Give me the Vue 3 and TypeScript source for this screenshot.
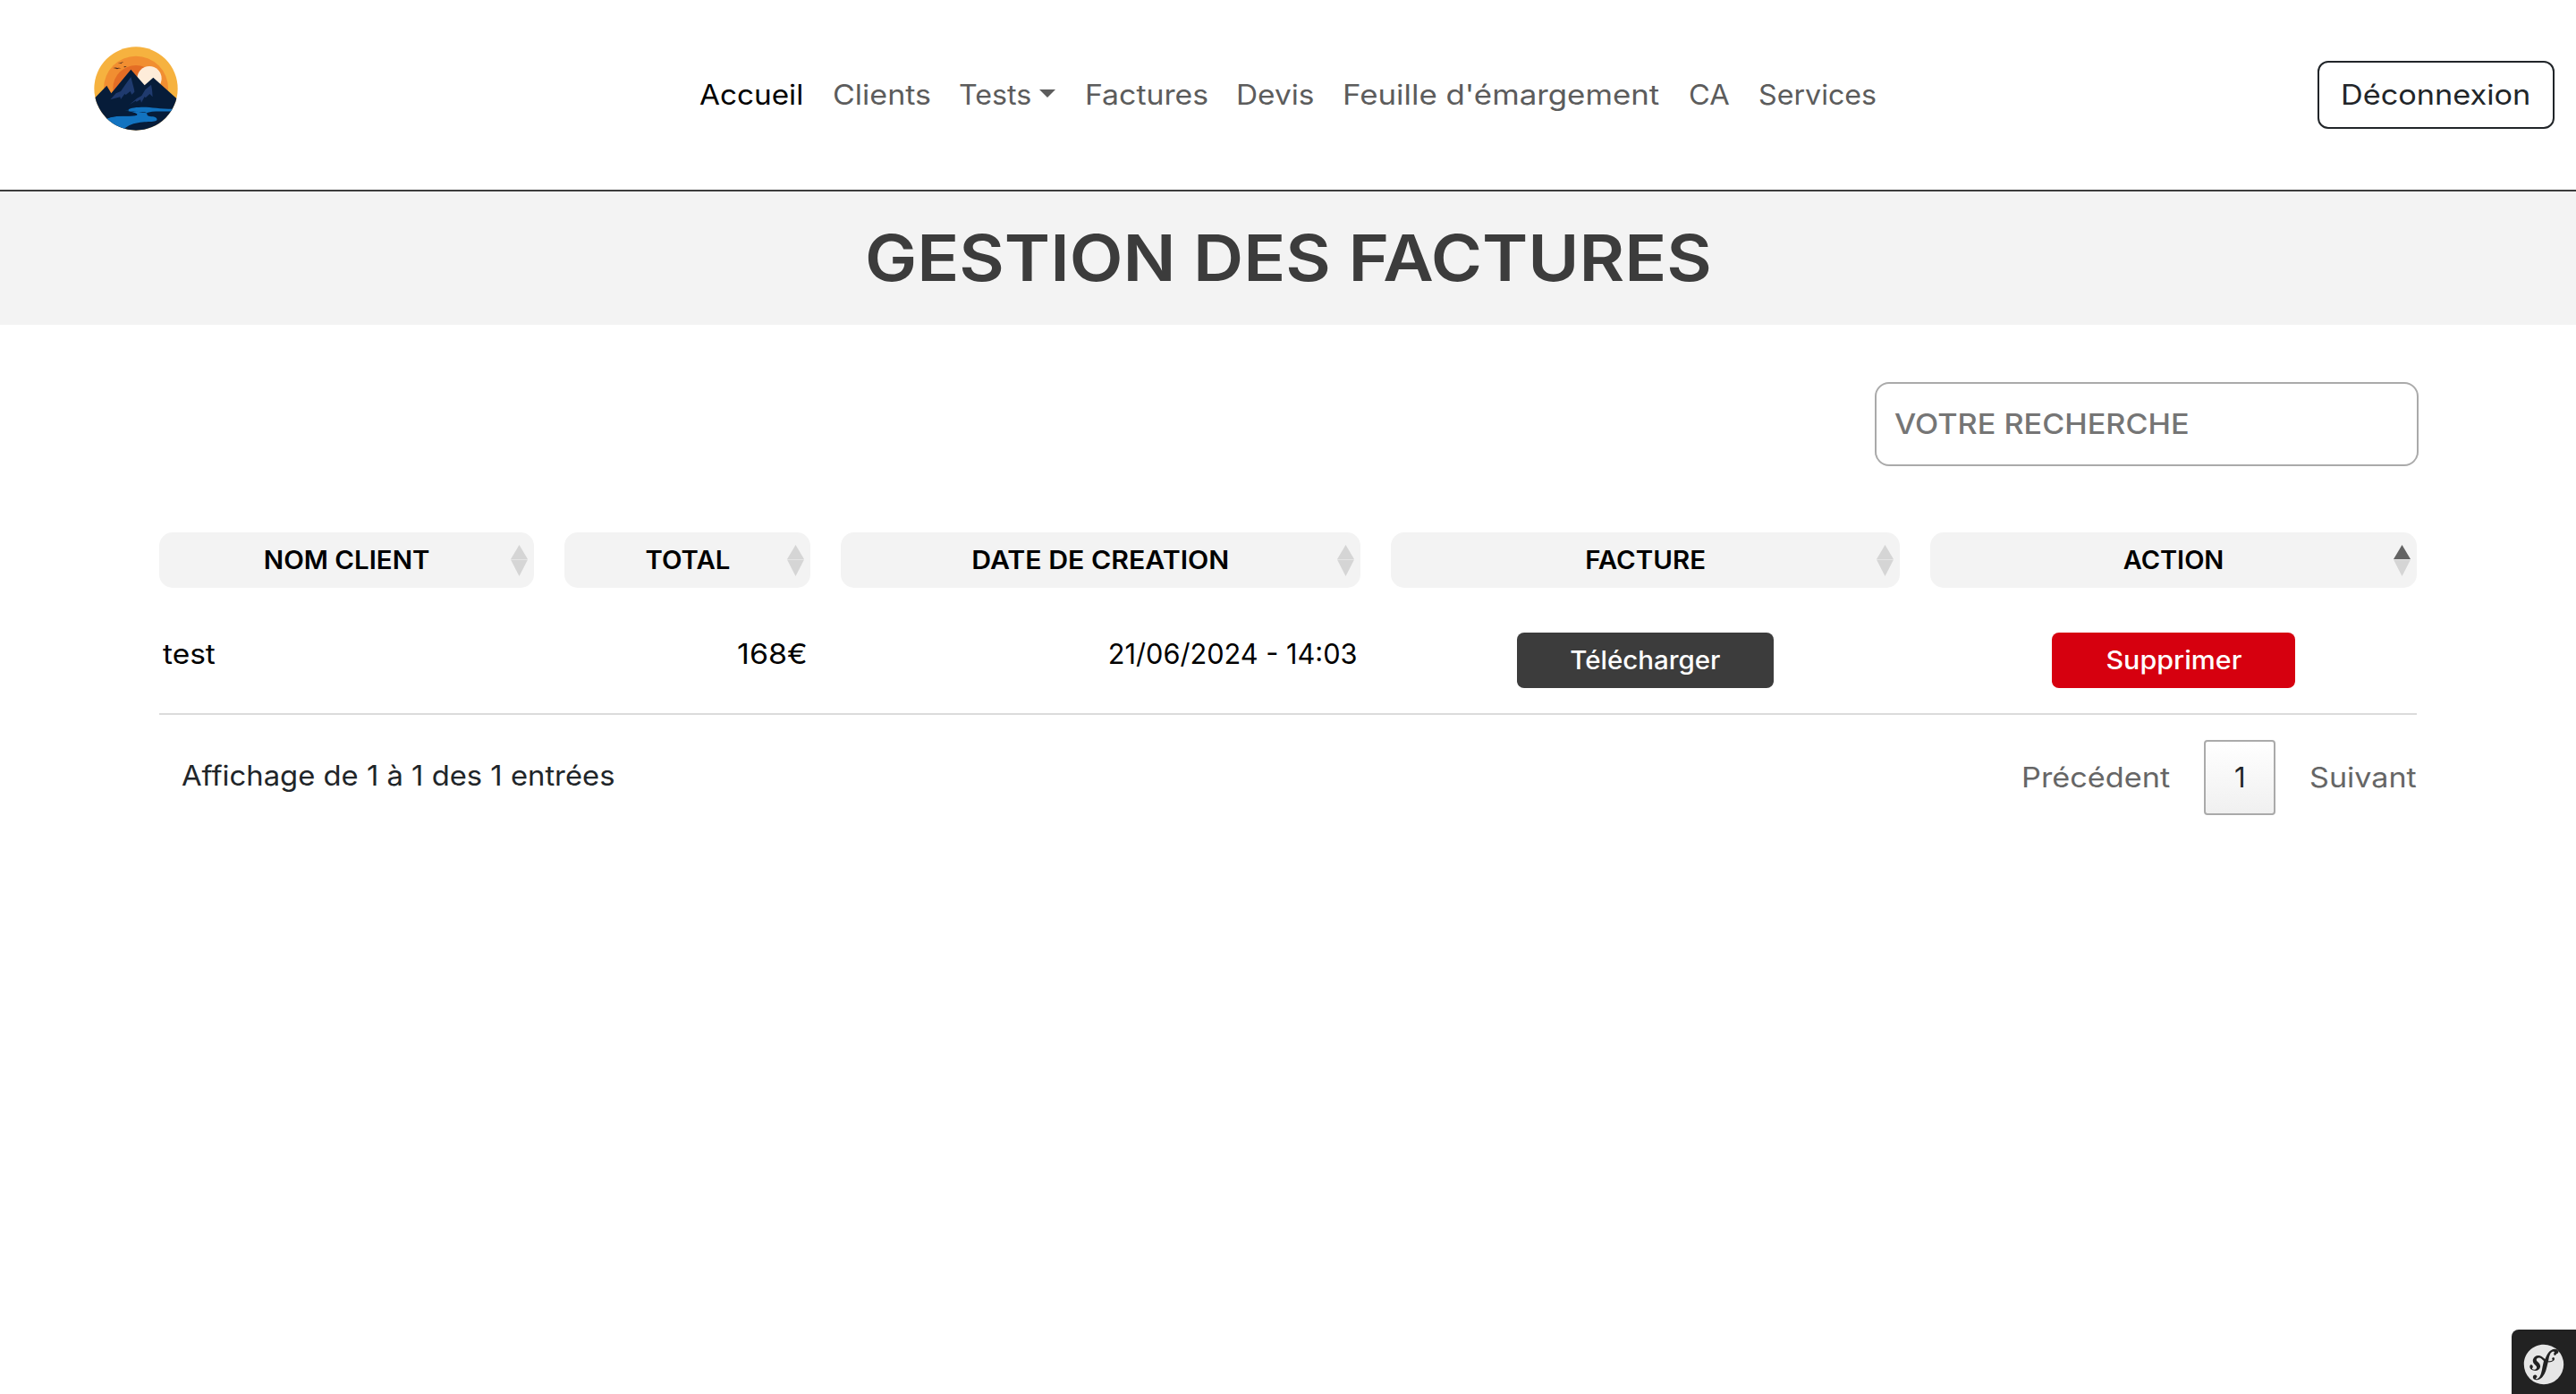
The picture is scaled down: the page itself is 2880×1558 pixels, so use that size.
<script setup lang="ts">
interface NavItem { label: string; width: number; stretch: number; active?: boolean; dropdown?: boolean }
interface Column { label: string; stretch: number; sorted?: boolean }

const navItems: NavItem[] = [
  { label: 'Accueil', width: 117, stretch: 1.074, active: true },
  { label: 'Clients', width: 108.6, stretch: 1.098 },
  { label: 'Tests', width: 108.6, stretch: 1.04, dropdown: true },
  { label: 'Factures', width: 137.6, stretch: 1.09 },
  { label: 'Devis', width: 87.2, stretch: 1.077 },
  { label: "Feuille d'émargement", width: 354.8, stretch: 1.124 },
  { label: 'CA', width: 45.4, stretch: 1.054 },
  { label: 'Services', width: 132, stretch: 1.0385 },
]

const columns: Column[] = [
  { label: 'NOM CLIENT', stretch: 1.059 },
  { label: 'TOTAL', stretch: 1.054 },
  { label: 'DATE DE CREATION', stretch: 1.088 },
  { label: 'FACTURE', stretch: 1.06 },
  { label: 'ACTION', stretch: 1.041, sorted: true },
]

const widen = (n: number) => ({ transform: `scaleX(${n})` })
</script>

<template>
  <div class="page">
    <header class="navbar">
      <svg class="logo" viewBox="46 34 282 282">
        <defs>
          <clipPath id="disc"><circle cx="187" cy="175" r="140" /></clipPath>
        </defs>
        <g clip-path="url(#disc)">
          <rect x="46" y="34" width="282" height="282" fill="#f6b23f" />
          <circle cx="187" cy="174" r="108" fill="#f18e31" />
          <circle cx="187" cy="174" r="77" fill="#e46d25" />
          <circle cx="232" cy="141" r="41" fill="#feecd9" />
          <path d="M40 216 L89 165 L104 191 L170 111 L216 164 L245 138 L330 214 V320 H40Z" fill="#061c39" />
          <path d="M170 136 L181 178 L182 186 L173 195 L168 184 L153 196 L149 193 L136 211 L134 203 L101 212 L120 191 L136 184 L151 162 Z" fill="#1f3a6e" />
          <path d="M238 162 L241 178 L243 203 L233 193 L219 206 L216 202 L205 222 L202 212 L189 219 L186 216 L166 228 L190 208 L206 199 L218 179 Z" fill="#1f3a6e" />
          <path d="M330 243 C270 245 240 236 205 237 C180 238 160 241 162 248 C168 256 222 250 224 258 C224 266 228 268 244 269 C258 272 262 280 252 284 C236 290 186 280 150 308 L140 325 H100 L86 276 C120 262 160 270 184 266 C196 263 190 257 166 254 C150 252 130 253 110 252 L162 249 C180 252 200 252 222 257 C240 248 280 253 330 251Z" fill="#1273c0" />
          <path d="M86 250 H160 C185 256 198 261 188 265 C160 269 125 262 88 276Z" fill="#061c39" />
          <path d="M110 106 Q120 103 125 106 Q130 104 138 107 Q128 107 124 110 Q119 107 110 106Z M126 88 Q133 87 136 89 Q141 84 146 86 Q140 88 137 92 Q132 89 126 88Z M145 103 L150 100 L156 101 L150 104Z" fill="#4a2b1e" />
        </g>
      </svg>
      <nav class="nav">
        <a v-for="item in navItems" :key="item.label" class="nav-link" :class="{ active: item.active }"
          :style="{ width: `${item.width}px` }">
          <span class="text start" :style="widen(item.stretch)">{{ item.label }}</span>
          <svg v-if="item.dropdown" class="caret" viewBox="0 0 18 9"><path d="M0 0H18L9 9Z" fill="currentColor" /></svg>
        </a>
      </nav>
      <button class="logout"><span class="text start">Déconnexion</span></button>
    </header>

    <div class="banner"><h1>GESTION DES FACTURES</h1></div>

    <main class="content">
      <div class="search"><span class="text start">VOTRE RECHERCHE</span></div>

      <div class="grid head">
        <div v-for="col in columns" :key="col.label" class="th">
          <span class="text" :style="widen(col.stretch)">{{ col.label }}</span>
          <svg class="sort" viewBox="0 0 19 35">
            <path d="M9.5 0L19 16H0Z" :fill="col.sorted ? '#636363' : '#d5d5d5'" />
            <path d="M0 16.6H19L9.5 35Z" fill="#d5d5d5" />
          </svg>
        </div>
      </div>

      <div class="grid row">
        <div class="cell name"><span class="text start">test</span></div>
        <div class="cell right total"><span class="text end">168€</span></div>
        <div class="cell right date"><span class="text end">21/06/2024 - 14:03</span></div>
        <div class="action"><button class="btn download"><span class="text">Télécharger</span></button></div>
        <div class="action"><button class="btn delete"><span class="text">Supprimer</span></button></div>
      </div>

      <footer class="footer">
        <div class="info"><span class="text start">Affichage de 1 à 1 des 1 entrées</span></div>
        <div class="pager">
          <span class="prev"><span class="text start">Précédent</span></span>
          <span class="current">1</span>
          <span class="next"><span class="text start">Suivant</span></span>
        </div>
      </footer>
    </main>

    <div class="toolbar">
      <svg viewBox="0 0 24 24">
        <path fill="#e6e6e6" d="M12 .9C5.8.9.9 5.8.9 12a11.1 11.1 0 1 0 22.2 0A11.1 11.1 0 0 0 12 .9zm6.5 6c-.6 0-.9-.3-.9-.8 0-.2 0-.4.2-.6l.2-.4c0-.3-.5-.4-.6-.4-1.8.1-2.3 2.5-2.7 4.4l-.2 1c1 .2 1.8 0 2.2-.3.6-.4-.2-.7-.1-1.2.1-.3.5-.5.7-.6.5 0 .7.5.7.9 0 .7-1 1.8-3 1.8l-.6-.1-.6 2.4c-.4 1.6-.8 3.8-2.4 5.7-1.4 1.7-2.9 1.9-3.5 1.9-1.2 0-1.9-.6-2-1.5 0-.8.7-1.3 1.2-1.3.6 0 1.1.5 1.1 1s-.2.6-.4.6c-.1.1-.3.2-.3.4 0 .1.1.3.4.3.5 0 .8-.3 1.1-.5 1.2-.9 1.6-2.7 2.2-5.7l.1-.7.7-3.2c-.8-.6-1.3-1.4-2.4-1.7-.6-.1-1.1.1-1.5.5-.4.5-.2 1.1.2 1.5l.7.6c.7.8 1.2 1.6 1 2.5-.3 1.5-2 2.6-4 1.9-1.8-.6-2-1.8-1.8-2.5.2-.6.6-.7 1.1-.6.5.2.6.7.6 1.2l-.1.3c-.2.1-.3.3-.3.4-.1.4.4.6.7.7.7.3 1.6-.2 1.8-.8.2-.6-.2-1.1-.4-1.2l-.8-.9c-.4-.4-1.2-1.5-.8-2.8.2-.5.5-1 .9-1.4 1-.7 2-.8 3-.6 1.3.4 1.9 1.2 2.8 1.9.5-1.3 1.1-2.6 2-3.8.9-1 2-1.7 3.3-1.8 1.2 0 2.2.5 2.2 1.4 0 .4-.2 1.2-1 1.2z" />
      </svg>
    </div>
  </div>
</template>

<style>
body { background: #fff; overflow: hidden; }
</style>

<style scoped>
* { box-sizing: border-box; }
.page {
  position: relative;
  height: 1558px;
  font-family: Inter, "Open Sans", sans-serif;
  font-size: 31px;
  line-height: 48px;
  color: #212529;
  white-space: nowrap;
}
button { font: inherit; color: inherit; margin: 0; padding: 0; cursor: pointer; }
.text { display: inline-block; }
.start { transform-origin: left; }
.end { transform-origin: right; }

.navbar {
  display: flex;
  align-items: center;
  height: 214px;
  padding: 0 24px 0 105.4px;
  border-bottom: 2px solid #3c3c3c;
}
.logo { width: 94px; height: 94px; margin-top: -15px; flex: none; }
.nav { display: flex; gap: 32px; margin-left: 583px; }
.nav-link { display: flex; align-items: center; flex: none; color: #5c5c5c; }
.nav-link.active { color: #000; }
.caret { width: 18px; height: 9px; flex: none; margin: -3px 0 0 11.4px; }
.logout {
  width: 265px;
  height: 76px;
  margin-left: auto;
  padding-left: 24.2px;
  border: 2px solid #212529;
  border-radius: 12px;
  background: #fff;
  text-align: left;
}
.logout .text { transform: scaleX(1.105); }

.banner {
  display: flex;
  align-items: center;
  justify-content: center;
  height: 149px;
  background: #f3f3f3;
}
h1 {
  margin: -1px 0 0;
  font-size: 72px;
  font-weight: 600;
  line-height: 88px;
  color: #3c3c3c;
  transform: scaleX(1.08);
}

.content { padding: 64px 178px 0; }
.search {
  display: flex;
  align-items: center;
  width: 608px;
  height: 94px;
  margin-left: auto;
  margin-right: -2px;
  padding-left: 19.5px;
  border: 2px solid #aaa;
  border-radius: 16px;
  color: #757575;
  font-weight: 500;
}
.search .text { transform: scaleX(1.103); }
.grid {
  display: grid;
  grid-template-columns: 419px 275px 581px 569px 544px;
  gap: 34px;
}
.head { margin-top: 74px; }
.th {
  position: relative;
  display: flex;
  align-items: center;
  justify-content: center;
  height: 62px;
  border-radius: 15px;
  background: #f3f3f3;
  color: #000;
  font-size: 27.8px;
  font-weight: 600;
}
.sort { position: absolute; right: 7.5px; top: 13.5px; width: 19px; height: 35px; }
.row { height: 142px; border-bottom: 2px solid #dbdbdb; color: #000; }
.cell { padding-top: 50px; }
.right { text-align: right; }
.name { padding-left: 4.4px; }
.name .text { transform: scaleX(1.08); }
.total { padding-right: 3px; }
.total .text { transform: scaleX(1.097); }
.date { padding-right: 3.5px; }
.date .text { transform: scaleX(0.99); }
.action { display: flex; justify-content: center; padding-top: 50px; }
.btn {
  height: 62px;
  border: 0;
  border-radius: 8px;
  color: #fff;
  font-size: 27.8px;
  font-weight: 500;
}
.download { width: 287px; background: #3c3c3c; }
.download .text { transform: scaleX(1.059); }
.delete { width: 272px; background: #d6000f; }
.delete .text { transform: scaleX(1.094); }

.footer { display: flex; justify-content: space-between; padding-top: 28px; }
.info { padding: 15.5px 0 0 25.4px; }
.info .text { transform: scaleX(1.0575); }
.pager { display: flex; align-items: center; height: 84px; color: #666; }
.prev { width: 204px; }
.prev .text { transform: scaleX(1.105); }
.current {
  width: 80px;
  height: 84px;
  border: 2px solid #aaa;
  border-radius: 4px;
  background: linear-gradient(#fff, #f0f0f0);
  color: #212529;
  line-height: 80px;
  text-align: center;
}
.next { width: 120.2px; margin-left: 37.5px; }
.next .text { transform: scaleX(1.1); }

.toolbar {
  position: absolute;
  right: 0;
  bottom: 0;
  width: 72px;
  height: 72px;
  border-radius: 8px 0 0 0;
  background: #222;
}
.toolbar svg { display: block; width: 48px; height: 48px; margin: 15px 0 0 12px; }
</style>
